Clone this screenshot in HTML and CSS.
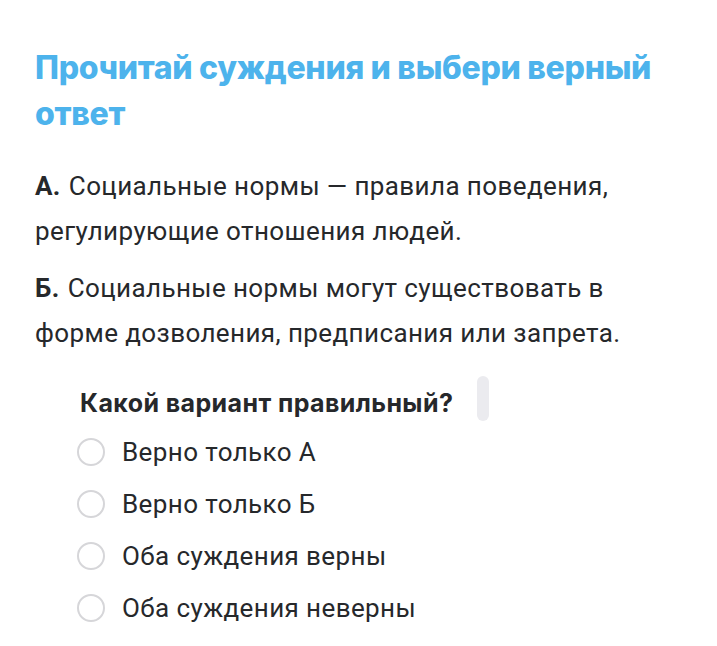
FILE: index.html
```html
<!DOCTYPE html>
<html lang="ru">
<head>
    <meta charset="UTF-8">
    <title>Суждения</title>
    <link rel="stylesheet" href="styles.css">
</head>
<body>
    <div class="zadanie">
        <h1>Прочитай суждения и выбери верный ответ</h1>

        <p><b>А.</b>Социальные нормы — правила поведения, регулирующие отношения людей.</p>
        <p><b>Б.</b>Социальные нормы могут существовать в форме дозволения, предписания или запрета.</p>

        <div class="vopros">
            <div class="vopros-head">
                <h2>Какой вариант правильный?</h2>
                <span class="polosa"></span>
            </div>
            <label class="otvet"><span class="krug"></span>Верно только А</label>
            <label class="otvet"><span class="krug"></span>Верно только Б</label>
            <label class="otvet"><span class="krug"></span>Оба суждения верны</label>
            <label class="otvet"><span class="krug"></span>Оба суждения неверны</label>
        </div>
    </div>
</body>
</html>
```

FILE: styles.css
```css
* {
    margin: 0;
    padding: 0;
    box-sizing: border-box;
}

body {
    background: #fff;
    font-family: 'Roboto', 'Liberation Sans', sans-serif;
    color: #26282b;
}

.zadanie {
    padding: 45px 40px 0 35px;
}

.zadanie h1 {
    font-family: 'Inter', 'Liberation Sans', sans-serif;
    font-size: 32px;
    font-weight: 800;
    line-height: 46px;
    color: #4db3ec;
    letter-spacing: -0.3px;
    margin-bottom: 27px;
}

.zadanie p {
    font-size: 26px;
    line-height: 45px;
    letter-spacing: 0.4px;
    margin-bottom: 12px;
}

/* буква суждения */
.zadanie p b {
    font-weight: 700;
    margin-right: 8px;
}

.vopros {
    padding: 12px 0 0 45px;
}

.vopros-head {
    display: flex;
    align-items: flex-start;
    gap: 24px;
}

.vopros-head h2 {
    font-family: 'Inter', 'Liberation Sans', sans-serif;
    font-size: 25px;
    font-weight: 700;
    line-height: 46px;
    letter-spacing: 0.4px;
}

.polosa {
    width: 12px;
    height: 45px;
    margin-top: -4px;
    border-radius: 6px;
    background: #ebebef;
}

.otvet {
    display: flex;
    align-items: center;
    height: 52px;
    font-size: 26px;
    letter-spacing: 0.4px;
    margin-left: -3px;
}

.krug {
    width: 28px;
    height: 28px;
    border: 2px solid #d6d6d9;
    border-radius: 50%;
    margin-right: 17px;
}
```
